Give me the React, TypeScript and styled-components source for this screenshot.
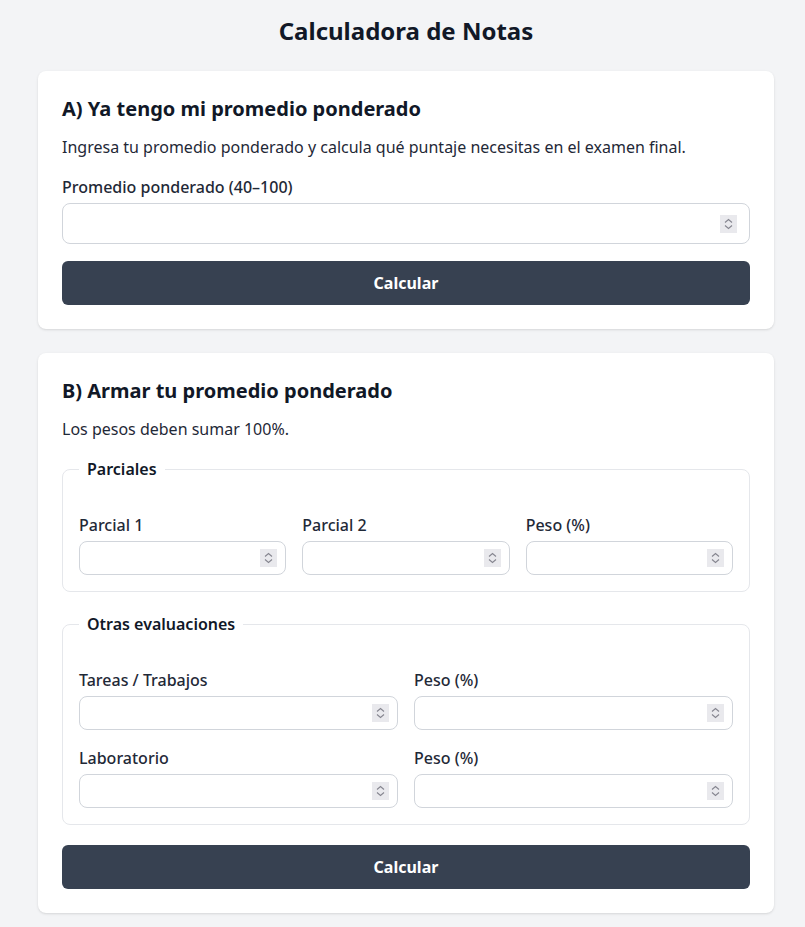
import { createGlobalStyle, styled } from 'styled-components';

const GlobalStyle = createGlobalStyle`
  body {
    margin: 0;
    background: #f3f4f6;
    font-family: 'Noto Sans', 'DejaVu Sans', sans-serif;
    color: #111827;
  }
`;

const Page = styled.main`
  padding: 15px 31px 12px 38px;
`;

const Title = styled.h1`
  margin: 0 0 24px;
  font-size: 24px;
  line-height: 32px;
  font-weight: 700;
  text-align: center;
  color: #111827;
`;

const Card = styled.section`
  background: #ffffff;
  border-radius: 8px;
  padding: 24px;
  box-shadow:
    0 1px 3px rgba(0, 0, 0, 0.1),
    0 1px 2px -1px rgba(0, 0, 0, 0.1);

  & + & {
    margin-top: 24px;
  }
`;

const Heading = styled.h2`
  margin: 0 0 12px;
  font-size: 20px;
  line-height: 28px;
  font-weight: 700;
  color: #111827;
`;

const Description = styled.p`
  margin: 0 0 16px;
  font-size: 16px;
  line-height: 24px;
  color: #1f2937;
`;

const Label = styled.label`
  display: block;
  margin-bottom: 4px;
  font-size: 16px;
  line-height: 24px;
  font-weight: 500;
  color: #1f2937;
`;

const InputWrap = styled.div`
  position: relative;
`;

const NumberInput = styled.input<{ $tall?: boolean }>`
  display: block;
  box-sizing: border-box;
  width: 100%;
  height: ${({ $tall }) => ($tall ? '41px' : '34px')};
  padding: ${({ $tall }) => ($tall ? '0 34px 0 12px' : '0 30px 0 8px')};
  border: 1px solid #d1d5db;
  border-radius: 8px;
  background: #ffffff;
  font-family: inherit;
  font-size: 16px;
  color: #111827;
  -moz-appearance: textfield;

  &::-webkit-inner-spin-button,
  &::-webkit-outer-spin-button {
    -webkit-appearance: none;
    margin: 0;
  }
`;

// stand-in for the browser's number stepper, drawn as it shows in the reference
const Stepper = styled.span<{ $inset: number }>`
  position: absolute;
  top: 50%;
  right: ${({ $inset }) => $inset}px;
  width: 17px;
  height: 18px;
  transform: translateY(-50%);
  background: #e9e9ed;
  pointer-events: none;

  svg {
    display: block;
  }
`;

const Button = styled.button<{ $gap: number }>`
  display: block;
  width: 100%;
  height: 44px;
  margin-top: ${({ $gap }) => $gap}px;
  border: none;
  border-radius: 6px;
  background: #374151;
  color: #ffffff;
  font-family: inherit;
  font-size: 16px;
  font-weight: 700;
  cursor: pointer;
`;

const Group = styled.fieldset`
  margin: 0;
  min-width: 0;
  padding: 16px;
  border: 1px solid #e5e7eb;
  border-radius: 8px;

  & + & {
    margin-top: 20px;
  }
`;

const Legend = styled.legend`
  padding: 0 8px;
  font-size: 16px;
  line-height: 24px;
  font-weight: 600;
  color: #111827;
`;

const Grid = styled.div<{ $cols: number }>`
  display: grid;
  grid-template-columns: repeat(${({ $cols }) => $cols}, minmax(0, 1fr));
  gap: 16px;
  margin-top: 16px;
`;

const Field = ({ label, tall }: { label: string; tall?: boolean }) => (
  <div>
    <Label>{label}</Label>
    <InputWrap>
      <NumberInput type="number" $tall={tall} />
      <Stepper $inset={tall ? 13 : 9}>
        <svg width="17" height="18" viewBox="0 0 17 18" fill="none">
          <path d="M5 7.5L8.5 4.5L12 7.5" stroke="#85858f" strokeWidth="1.1" />
          <path d="M5 10.5L8.5 13.5L12 10.5" stroke="#85858f" strokeWidth="1.1" />
        </svg>
      </Stepper>
    </InputWrap>
  </div>
);

export default function App() {
  return (
    <>
      <GlobalStyle />
      <Page>
        <Title>Calculadora de Notas</Title>

        <Card>
          <Heading>A) Ya tengo mi promedio ponderado</Heading>
          <Description>
            Ingresa tu promedio ponderado y calcula qué puntaje necesitas en el examen final.
          </Description>
          <Field label="Promedio ponderado (40–100)" tall />
          <Button $gap={17}>Calcular</Button>
        </Card>

        <Card>
          <Heading>B) Armar tu promedio ponderado</Heading>
          <Description>Los pesos deben sumar 100%.</Description>

          <Group>
            <Legend>Parciales</Legend>
            <Grid $cols={3}>
              <Field label="Parcial 1" />
              <Field label="Parcial 2" />
              <Field label="Peso (%)" />
            </Grid>
          </Group>

          <Group>
            <Legend>Otras evaluaciones</Legend>
            <Grid $cols={2}>
              <Field label="Tareas / Trabajos" />
              <Field label="Peso (%)" />
              <Field label="Laboratorio" />
              <Field label="Peso (%)" />
            </Grid>
          </Group>

          <Button $gap={20}>Calcular</Button>
        </Card>
      </Page>
    </>
  );
}
